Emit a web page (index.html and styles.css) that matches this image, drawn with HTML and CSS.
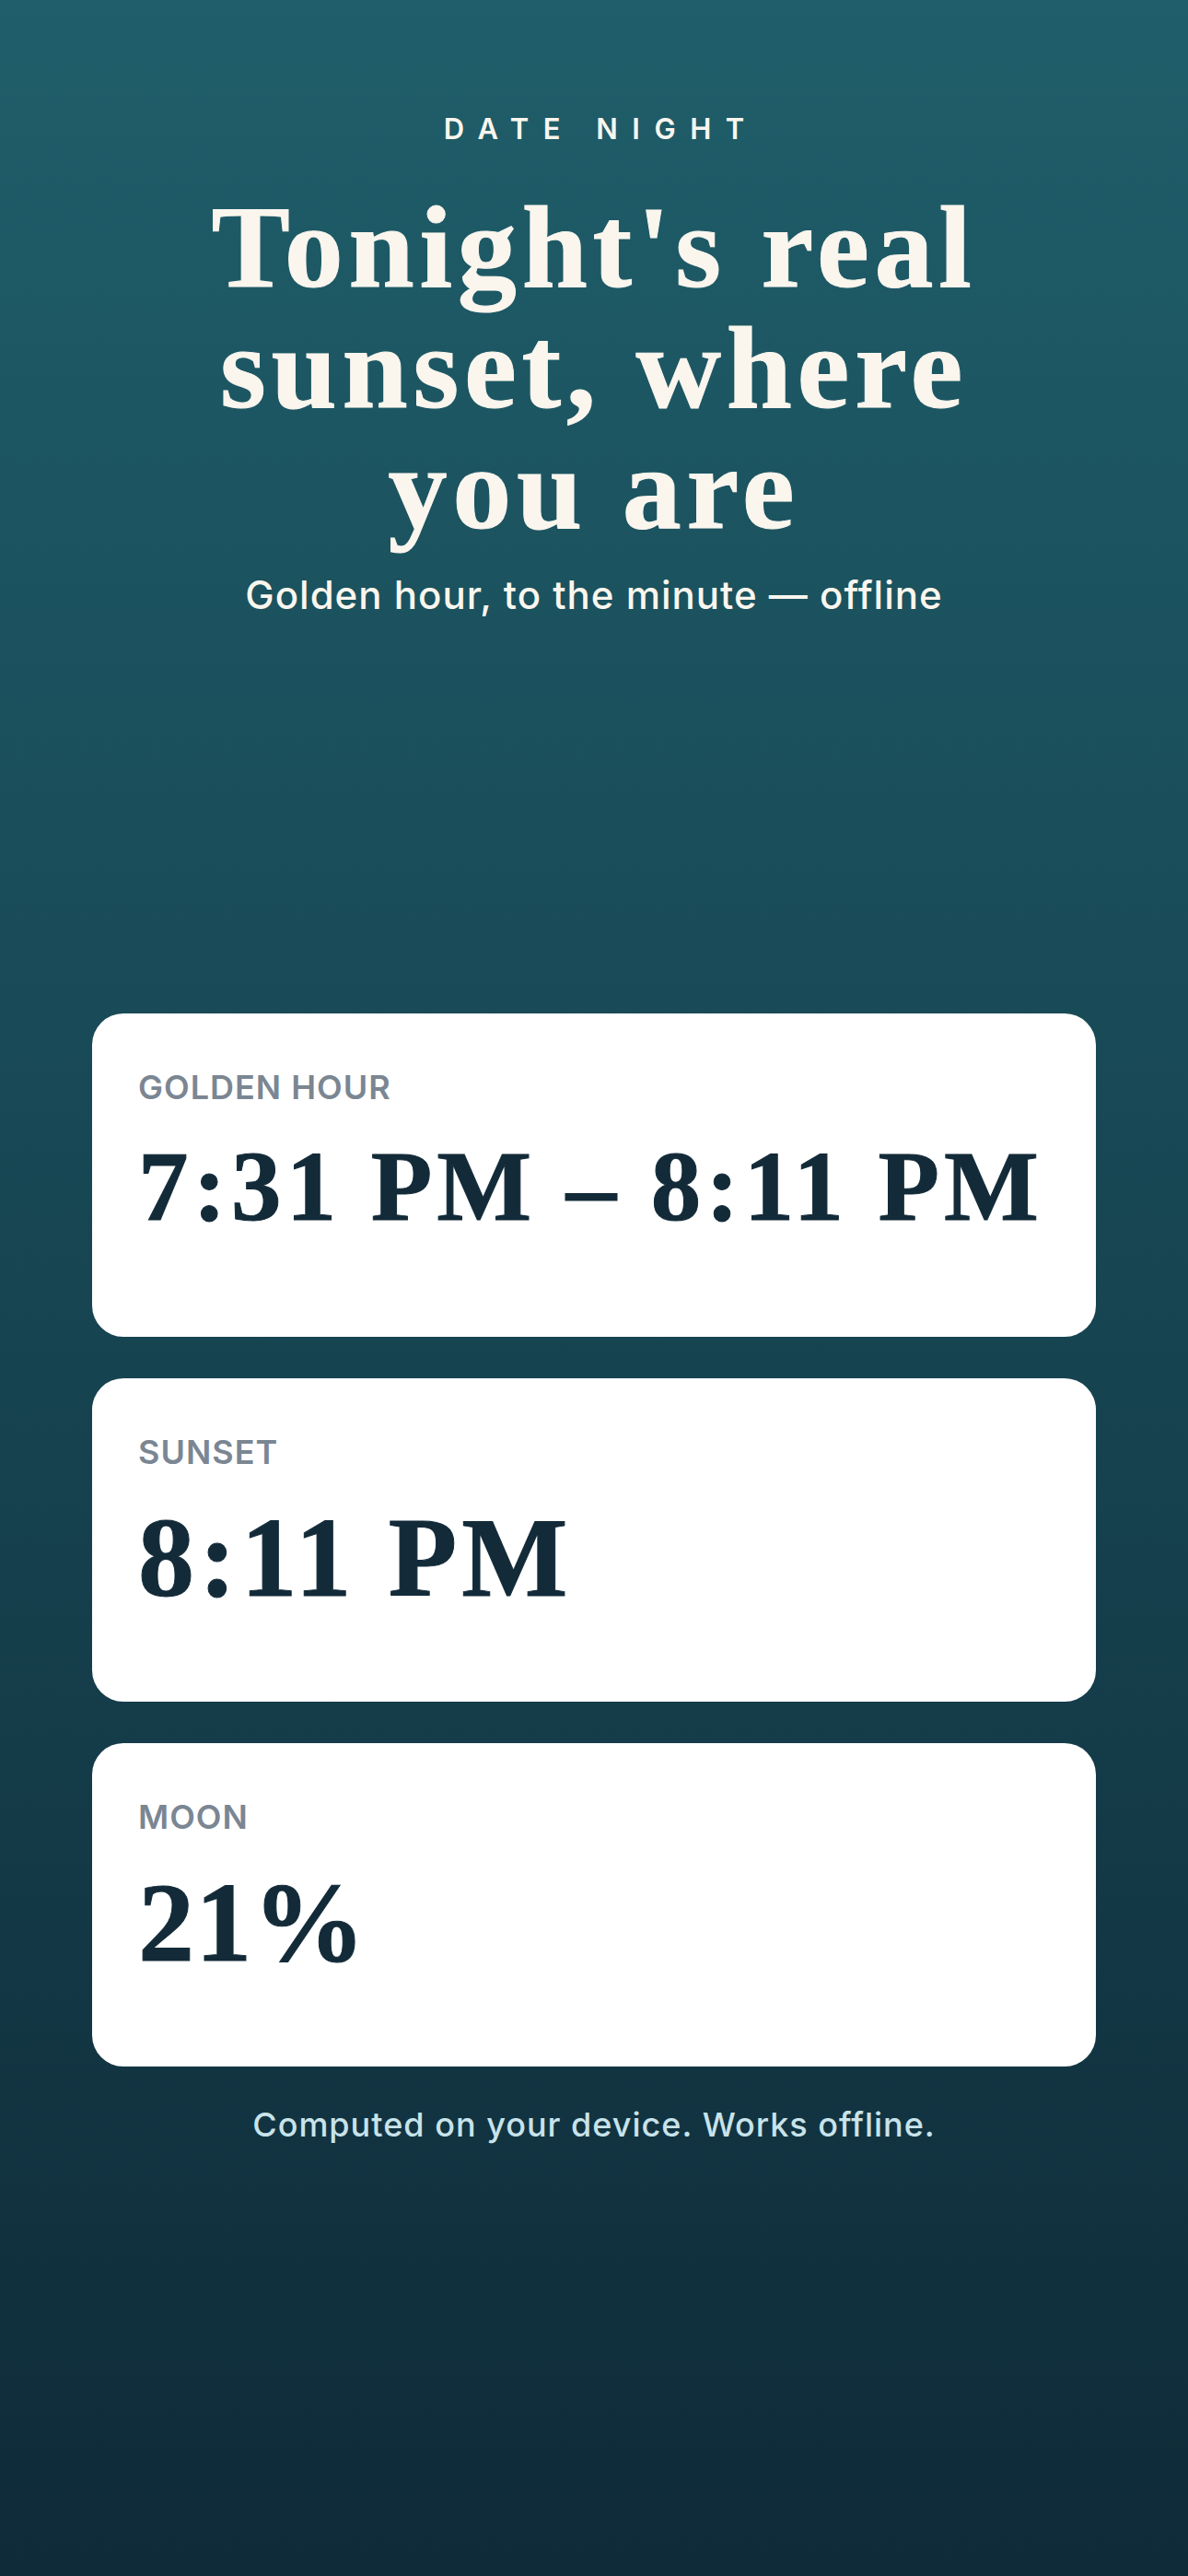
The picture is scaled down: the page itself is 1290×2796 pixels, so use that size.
FILE: index.html
```html
<!DOCTYPE html>
<html lang="en">
<head>
  <meta charset="UTF-8">
  <meta name="viewport" content="width=device-width, initial-scale=1.0">
  <title>Date Night</title>
  <link rel="stylesheet" href="styles.css">
</head>
<body>

<main class="page">
  <header class="hero">
    <p class="eyebrow">Date Night</p>
    <h1 class="hero-title">Tonight's real sunset, where you are</h1>
    <p class="hero-sub">Golden hour, to the minute — offline</p>
  </header>

  <section class="cards">
    <div class="card">
      <div class="card-label">Golden hour</div>
      <div class="card-value card-value--range">7:31 PM – 8:11 PM</div>
    </div>
    <div class="card">
      <div class="card-label">Sunset</div>
      <div class="card-value">8:11 PM</div>
    </div>
    <div class="card">
      <div class="card-label">Moon</div>
      <div class="card-value card-value--short">21%</div>
    </div>
  </section>

  <p class="footnote">Computed on your device. Works offline.</p>
</main>

</body>
</html>
```

FILE: styles.css
```css
body {
  margin: 0;
  min-height: 2796px;
  background: linear-gradient(180deg, #1f5e6a 0%, #174552 50%, #0f2a38 100%);
  font-family: Inter, "Liberation Sans", sans-serif;
  color: #faf6ee;
}

.page {
  padding: 124px 100px 0;
  text-align: center;
}

.eyebrow {
  margin: 0;
  font-size: 31px;
  line-height: 31px;
  font-weight: 600;
  letter-spacing: 0.5em;
  text-indent: 0.5em;
  text-transform: uppercase;
}

.hero-title {
  max-width: 900px;
  margin: 48px auto 0;
  font-family: "Liberation Serif", "DejaVu Serif", serif;
  font-size: 128px;
  line-height: 131px;
  font-weight: 700;
  letter-spacing: 0.045em;
  -webkit-text-stroke: 1px #faf6ee;
}

.hero-sub {
  margin: 26px 0 0;
  font-size: 42px;
  line-height: 48px;
  font-weight: 500;
  letter-spacing: 1px;
}

.cards {
  margin-top: 430px;
  display: flex;
  flex-direction: column;
  gap: 45px;
}

.card {
  box-sizing: border-box;
  height: 351px;
  padding: 62px 50px 0;
  background-color: #fff;
  border-radius: 34px;
  text-align: left;
}

.card-label {
  font-size: 36px;
  line-height: 36px;
  font-weight: 600;
  letter-spacing: 1px;
  color: #7b8693;
  text-transform: uppercase;
}

.card-value {
  margin-top: 36px;
  font-family: "Liberation Serif", "DejaVu Serif", serif;
  font-size: 122px;
  line-height: 122px;
  font-weight: 700;
  letter-spacing: 0.04em;
  color: #132a38;
  white-space: nowrap;
  -webkit-text-stroke: 1px #132a38;
}

.card-value--range {
  margin-top: 29px;
  font-size: 109px;
  letter-spacing: 0.047em;
}

.card-value--short {
  letter-spacing: 0.01em;
}

.footnote {
  margin: 43px 0 0;
  font-size: 36px;
  line-height: 40px;
  font-weight: 500;
  letter-spacing: 1px;
  color: #c8e3ea;
}
```
